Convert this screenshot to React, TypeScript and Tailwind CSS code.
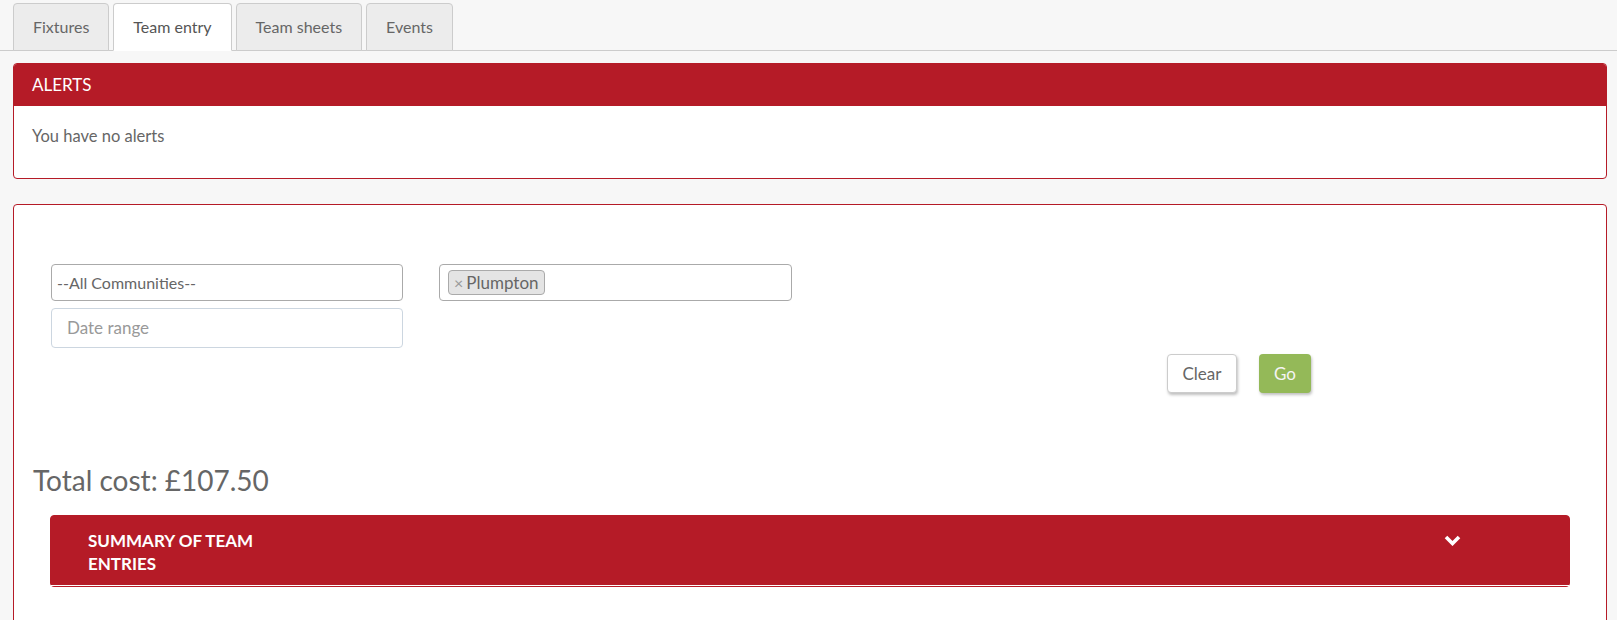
import React from 'react';

const tabs = ['Fixtures', 'Team entry', 'Team sheets', 'Events'];

function Tabs() {
  return (
    <div className="flex gap-[4px] border-b border-[#cccccc] pl-[13px] pt-[3px]">
      {tabs.map((label) => {
        const active = label === 'Team entry';
        return (
          <div
            key={label}
            className={`-mb-px flex h-[48px] items-center rounded-t-[4px] border px-[19px] text-[16px] ${
              active
                ? 'border-[#cccccc] border-b-white bg-white text-[#555555]'
                : 'border-[#cccccc] bg-[#ececec] text-[#666666]'
            }`}
          >
            {label}
          </div>
        );
      })}
    </div>
  );
}

function Alerts() {
  return (
    <div className="mx-[13px] mr-[10px] mt-[12px] overflow-hidden rounded-[4px] border border-[#b51b27] bg-white">
      <div className="flex h-[42px] items-center bg-[#b51b27] px-[18px] text-[17px] uppercase text-white">Alerts</div>
      <div className="h-[72px] px-[18px] pt-[18px] text-[16.5px] text-[#666666]">You have no alerts</div>
    </div>
  );
}

function Filters() {
  return (
    <div className="px-[37px] pt-[59px]">
      <div className="flex gap-[36px]">
        <div className="flex w-[352px] flex-col gap-[7px]">
          <div className="flex h-[37px] items-center rounded-[4px] border border-[#aaaaaa] px-[5px] text-[16px] text-[#666666]">
            --All Communities--
          </div>
          <div className="flex h-[40px] items-center rounded-[4px] border border-[#ccd6e0] px-[15px] text-[17px] text-[#999999]">
            Date range
          </div>
        </div>
        <div className="flex h-[37px] w-[353px] items-center rounded-[4px] border border-[#aaaaaa] px-[8px]">
          <span className="flex h-[25px] items-center gap-[3px] rounded-[4px] border border-[#aaaaaa] bg-[#e4e4e4] px-[5px] text-[17px] text-[#666666]">
            <span className="text-[16px] text-[#999999]">×</span>Plumpton
          </span>
        </div>
      </div>
      <div className="mt-[6px] flex justify-end gap-[22px] pr-[258px]">
        <button className="h-[39px] w-[70px] rounded-[4px] border border-[#cccccc] bg-white text-[17px] text-[#666666] shadow-[1px_2px_3px_rgba(0,0,0,0.25)]">
          Clear
        </button>
        <button className="h-[39px] w-[52px] rounded-[4px] bg-[#94b958] text-[17px] text-[#f4f4f4] shadow-[1px_2px_3px_rgba(0,0,0,0.25)]">
          Go
        </button>
      </div>
    </div>
  );
}

function Summary() {
  return (
    <div className="mx-[36px] rounded-[4px] border border-[#b51b27] bg-[#b51b27]">
      <div className="flex h-[70px] items-start border-b border-white pl-[37px] pr-[108px] pt-[13px]">
        <div className="w-[200px] text-[17px] font-bold uppercase leading-[23px] text-white">Summary of team entries</div>
        <div className="ml-auto pt-[6px]">
          <svg width="17" height="11" viewBox="0 0 17 11">
            <polyline points="2,2 8.5,8.5 15,2" fill="none" stroke="white" strokeWidth="3.6" />
          </svg>
        </div>
      </div>
    </div>
  );
}

export default function App() {
  return (
    <div className="min-h-[620px] bg-[#f7f7f7] font-['Lato','Liberation_Sans',sans-serif]">
      <Tabs />
      <Alerts />
      <div className="ml-[13px] mr-[10px] mt-[25px] h-[440px] rounded-t-[4px] border border-[#b51b27] bg-white">
        <Filters />
        <div className="mt-[69px] pl-[19px] text-[28px] leading-[36px] text-[#666666]">Total cost: £107.50</div>
        <div className="mt-[17px]">
          <Summary />
        </div>
      </div>
    </div>
  );
}
